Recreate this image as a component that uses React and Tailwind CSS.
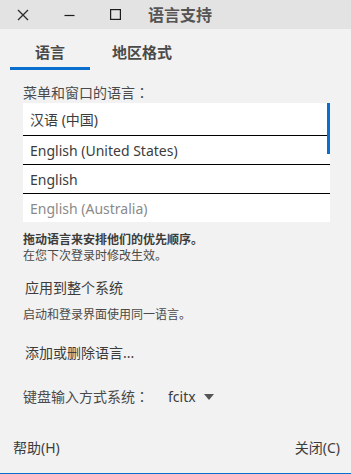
const rows = [
  { label: '汉语 (中国)', muted: false },
  { label: 'English (United States)', muted: false },
  { label: 'English', muted: false },
  { label: 'English (Australia)', muted: true },
]

const font = { fontFamily: '"Noto Sans", "Noto Sans CJK SC", sans-serif' }
const jp = { fontFamily: '"Noto Sans CJK JP", sans-serif' }

export default function App() {
  return (
    <div style={font} className="w-[351px] h-[474px] bg-[#f2f2f2] text-[#3c3c3c] flex flex-col overflow-hidden">
      {/* title bar */}
      <div className="h-[29px] bg-[#e3e3e3] flex items-center shrink-0">
        <div className="w-[46px] flex justify-center">
          <svg width="12" height="12" viewBox="0 0 12 12">
            <path d="M1 1 L11 11 M11 1 L1 11" stroke="#2c2c2c" strokeWidth="1.3" />
          </svg>
        </div>
        <div className="w-[46px] flex justify-center">
          <svg width="11" height="12" viewBox="0 0 11 12">
            <path d="M0.5 6.5 H10.5" stroke="#1c1c1c" strokeWidth="1.2" />
          </svg>
        </div>
        <div className="w-[46px] flex justify-center">
          <svg width="11" height="11" viewBox="0 0 11 11">
            <rect x="0.6" y="0.6" width="9.8" height="9.8" fill="none" stroke="#1c1c1c" strokeWidth="1.2" />
          </svg>
        </div>
        <div className="ml-[10px] text-[16px] font-bold text-[#555]">语言支持</div>
      </div>

      {/* tabs */}
      <div className="flex pl-[10px] pt-[12px] shrink-0">
        <div className="w-[80px] h-[30px] flex flex-col items-center">
          <div className="text-[15px] font-bold leading-[22px] h-[26px] text-[#4a4a4a]">语言</div>
          <div className="w-full h-[3px] bg-[#0a6ecf]" />
        </div>
        <div className="ml-[22px] text-[15px] font-bold leading-[22px] text-[#4a4a4a]">地区格式</div>
      </div>

      <div className="pl-[23px] pr-[21px] pt-[13px] flex flex-col">
        <div className="text-[14px] leading-[17px] text-[#4a4a4a]">
          菜单和窗口的语言<span style={jp}>：</span>
        </div>
        <div className="relative mt-[2px] bg-white w-[307px]">
          {rows.map((r, i) => (
            <div
              key={r.label}
              className={`flex items-center pl-[7px] text-[14px] ${i > 0 ? 'border-t border-black' : ''} ${i === 0 ? 'h-[32px]' : 'h-[29px]'} ${r.muted ? 'text-[#8a8a8a]' : 'text-[#3c3c3c]'}`}
            >
              {r.label}
            </div>
          ))}
          <div className="absolute right-0 top-0 w-[3px] h-[51px] bg-[#0a6ecf]" />
        </div>

        <div className="mt-[10px] text-[12px] font-bold leading-[15px] text-[#3c3c3c]">拖动语言来安排他们的优先顺序。</div>
        <div className="mt-[1px] text-[12px] leading-[15px] text-[#4a4a4a]">在您下次登录时修改生效。</div>

        <div className="mt-[16px] ml-[2px] text-[14px] leading-[18px] text-[#3c3c3c]">应用到整个系统</div>
        <div className="mt-[10px] text-[12px] leading-[15px] text-[#4a4a4a]">启动和登录界面使用同一语言。</div>

        <div className="mt-[22px] ml-[2px] text-[14px] leading-[18px] text-[#3c3c3c]">添加或删除语言...</div>

        <div className="mt-[25px] flex items-center text-[14px] leading-[18px]">
          <span className="text-[#4a4a4a]">
            键盘输入方式系统<span style={jp}>：</span>
          </span>
          <span className="ml-[19px] text-[14px] text-[#3c3c3c]">fcitx</span>
          <svg width="10" height="6" viewBox="0 0 10 6" className="ml-[8px]">
            <path d="M0 0 H10 L5 6 Z" fill="#555" />
          </svg>
        </div>
      </div>

      <div className="mt-auto flex justify-between items-center pl-[13px] pr-[11px] h-[30px] mb-[11px] text-[14px] text-[#3c3c3c]">
        <span>帮助(H)</span>
        <span>关闭(C)</span>
      </div>
      <div className="h-[1px] bg-[#0a6ecf] shrink-0" />
    </div>
  )
}
